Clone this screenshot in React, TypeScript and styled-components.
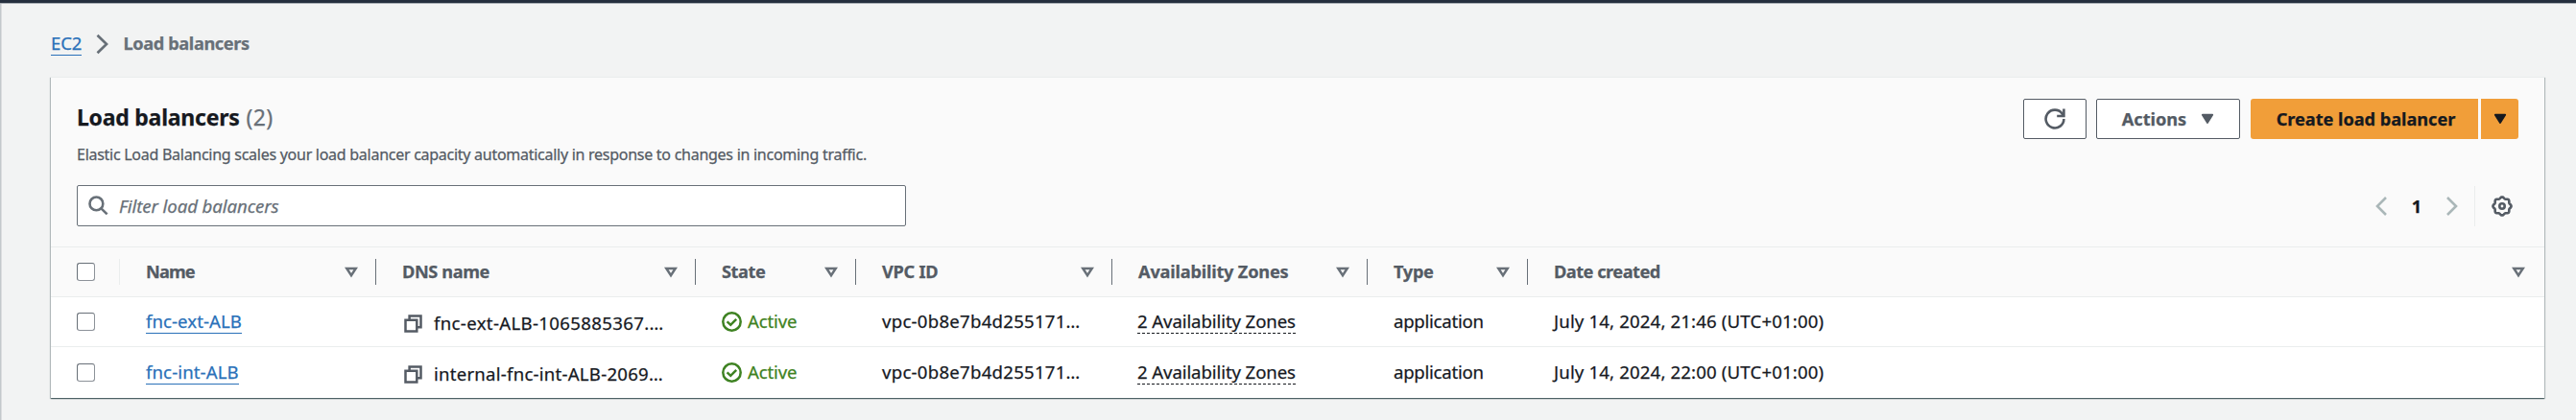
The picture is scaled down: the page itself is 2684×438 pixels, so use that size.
import React from "react";
import styled, { createGlobalStyle } from "styled-components";

const color = {
  text: "#16191f",
  heading: "#545b64",
  secondary: "#687078",
  link: "#2a71b9",
  orange: "#f19e39",
  green: "#3e8222",
  line: "#eaeded",
  disabled: "#aab7b8",
};

const GlobalStyle = createGlobalStyle`
  *, *::before, *::after { box-sizing: border-box; }
  body {
    margin: 0;
    background: #f2f3f3;
    color: ${color.text};
    font: 400 18.6px/24px "Noto Sans", "Open Sans", sans-serif;
    -webkit-text-stroke: 0.25px currentColor;
  }
`;

const Page = styled.div`
  height: 438px;
  border-top: 3px solid #252f3e;
  box-shadow: inset 0 1px 0 #a9aeb4, inset 2px 0 0 -0.5px #c3c8cb;
  padding: 0 33px 0 53px;
  overflow: hidden;
`;

const Txt = styled.span<{ $ls?: number }>`
  white-space: pre;
  letter-spacing: ${(p) => p.$ls ?? 0}px;
`;

const Link = styled.a<{ $ls?: number }>`
  color: ${color.link};
  border-bottom: 1px solid ${color.link};
  letter-spacing: ${(p) => p.$ls ?? 0}px;
  white-space: pre;
`;

const Breadcrumbs = styled.nav`
  display: flex;
  align-items: flex-start;
  height: 77px;
  padding-top: 30px;
`;

const BreadcrumbLink = styled(Link)`
  line-height: 24px;
`;

const BreadcrumbArrow = styled.svg`
  margin: 2px 15px 0 15px;
`;

const BreadcrumbCurrent = styled(Txt)`
  color: ${color.secondary};
  font-size: 18.2px;
  font-weight: 700;
`;

const Card = styled.section`
  width: 2598px;
  height: 335px;
  background: #fff;
  border-top: 1px solid ${color.line};
  box-shadow:
    0 1px 1px 0 rgba(0, 28, 36, 0.5),
    1px 1px 1px 0 rgba(0, 28, 36, 0.2),
    -1px 1px 1px 0 rgba(0, 28, 36, 0.2);
`;

const CardHeader = styled.header`
  height: 177px;
  padding: 22px 27px 0;
  background: #fafafa;
  border-bottom: 1px solid ${color.line};
`;

const HeaderRow = styled.div`
  display: flex;
  justify-content: space-between;
  height: 90px;
`;

const Title = styled.h1`
  margin: 3px 0 0;
  font-size: 23px;
  line-height: 32px;
  font-weight: 700;
`;

const Counter = styled(Txt)`
  color: ${color.secondary};
  font-weight: 400;
  margin-left: 7px;
`;

const Description = styled.p`
  margin: 11px 0 0;
  color: ${color.heading};
  font-size: 16px;
  line-height: 24px;
`;

const Actions = styled.div`
  display: flex;
  align-items: flex-start;
`;

const Button = styled.button<{ $w: number; $ml?: number }>`
  display: flex;
  align-items: center;
  justify-content: center;
  width: ${(p) => p.$w}px;
  height: 42px;
  margin: 0 0 0 ${(p) => p.$ml ?? 0}px;
  padding: 0 0 1px;
  background: #fff;
  border: 1px solid ${color.heading};
  border-radius: 2px;
  color: ${color.heading};
  font: 700 18.2px/24px "Noto Sans", "Open Sans", sans-serif;
`;

const PrimaryButton = styled(Button)<{ $side: "left" | "right" }>`
  background: ${color.orange};
  border: 0;
  border-radius: ${(p) => (p.$side === "left" ? "3px 0 0 3px" : "0 3px 3px 0")};
  color: ${color.text};
  padding-left: ${(p) => (p.$side === "left" ? 3 : 0)}px;
`;

const CaretIcon = styled.svg<{ $ml?: number }>`
  margin-left: ${(p) => p.$ml ?? 0}px;
`;

const ToolRow = styled.div`
  display: flex;
  justify-content: space-between;
`;

const Search = styled.div`
  display: flex;
  align-items: center;
  width: 864px;
  height: 43px;
  padding-left: 11px;
  background: #fff;
  border: 1px solid ${color.secondary};
  border-radius: 2px;
  color: ${color.secondary};
  font-style: italic;
`;

const SearchText = styled(Txt)`
  margin-left: 11px;
`;

const Pager = styled.div`
  display: flex;
  align-items: center;
  height: 42px;
  margin-top: 1px;
  padding-right: 6px;
`;

const PageNumber = styled.span`
  width: 62px;
  text-align: center;
  font-size: 18.2px;
  font-weight: 700;
  padding-bottom: 1px;
`;

const PagerDivider = styled.i`
  width: 1px;
  height: 42px;
  margin: 0 17px;
  background: ${color.line};
`;

const Row = styled.div<{ $h: number; $top: number }>`
  display: grid;
  grid-template-columns: 72px 267px 333px 167px 267px 266px 167px 1fr;
  height: ${(p) => p.$h}px;
  padding-top: ${(p) => p.$top}px;
  border-bottom: 1px solid ${color.line};
  &:last-child {
    border-bottom: 0;
  }
`;

const HeadRow = styled(Row)`
  background: #fafafa;
  color: ${color.heading};
  font-size: 18.2px;
  font-weight: 700;
`;

const HeadCell = styled.div<{ $light?: boolean; $last?: boolean }>`
  display: flex;
  align-items: center;
  justify-content: space-between;
  height: 27px;
  padding: 0 ${(p) => (p.$last ? 20 : 18)}px 0 27px;
  border-right: ${(p) => (p.$last ? "0" : `1px solid ${p.$light ? color.line : color.secondary}`)};
`;

const HeadLabel = styled(Txt)`
  padding-bottom: 1px;
`;

const Cell = styled.div`
  display: flex;
  align-items: flex-start;
  padding-left: 27px;
  white-space: nowrap;
`;

const Checkbox = styled.span<{ $mt?: number }>`
  width: 19px;
  height: 19px;
  margin-top: ${(p) => p.$mt ?? 0}px;
  border: 1px solid ${color.secondary};
  border-bottom-color: #8c9299;
  border-right-color: #8c9299;
  border-radius: 3px;
  background: #fff;
`;

const DnsText = styled(Txt)`
  margin: 2px 0 0 12px;
`;

const CopyIcon = styled.svg`
  margin: 5px 0 0 2px;
`;

const Status = styled.span`
  display: flex;
  color: ${color.green};
`;

const StatusIcon = styled.svg`
  margin: 2px 6px 0 0;
`;

const Zones = styled(Txt)`
  height: 25px;
  margin-left: -1px;
  background: repeating-linear-gradient(90deg, ${color.text} 0 3px, transparent 3px 5.05px) left bottom / 100% 1px no-repeat;
`;

const Chevron = ({ left, c }: { left?: boolean; c: string }) => (
  <svg width="12" height="20" viewBox="0 0 12 20" fill="none" stroke={c} strokeWidth="2.6">
    <path d={left ? "M11 1 2 10 11 19" : "M1 1 10 10 1 19"} />
  </svg>
);

const Caret = ({ ml }: { ml?: number }) => (
  <CaretIcon $ml={ml} width="14" height="12" viewBox="0 0 14 12">
    <path d="M1.8 1.7h10.4L7 10z" fill="currentColor" stroke="currentColor" strokeWidth="1.8" strokeLinejoin="round" />
  </CaretIcon>
);

const SortIcon = () => (
  <svg width="14" height="12" viewBox="0 0 14 12" fill="none" stroke={color.secondary}>
    <path d="M2.3 2h9.4L7 9.2z" strokeWidth="2.5" />
  </svg>
);

const gearPath =
  Array.from({ length: 96 }, (_, i) => {
    const a = (i / 96) * Math.PI * 2;
    const r = 8.8 + 0.75 * Math.cos(8 * a);
    return `${i ? "L" : "M"}${(11 + r * Math.sin(a)).toFixed(2)} ${(11 - r * Math.cos(a)).toFixed(2)}`;
  }).join("") + "Z";

const Gear = () => (
  <svg width="22" height="22" viewBox="0 0 22 22" fill="none" stroke={color.heading} strokeWidth="2.6">
    <path d={gearPath} />
    <circle cx="11" cy="11" r="2.7" />
  </svg>
);

const columns: { label: string; ls: number }[] = [
  { label: "Name", ls: -0.85 },
  { label: "DNS name", ls: -0.4 },
  { label: "State", ls: -0.4 },
  { label: "VPC ID", ls: -0.25 },
  { label: "Availability Zones", ls: -0.2 },
  { label: "Type", ls: -0.3 },
  { label: "Date created", ls: -0.5 },
];

const rows = [
  { name: "fnc-ext-ALB", nameLs: 0.07, dns: "fnc-ext-ALB-1065885367.…", dnsLs: 0.35, date: "July 14, 2024, 21:46 (UTC+01:00)" },
  { name: "fnc-int-ALB", nameLs: 0.11, dns: "internal-fnc-int-ALB-2069…", dnsLs: 0.24, date: "July 14, 2024, 22:00 (UTC+01:00)" },
];

export default function App() {
  return (
    <>
      <GlobalStyle />
      <Page>
        <Breadcrumbs>
          <BreadcrumbLink $ls={-0.12}>EC2</BreadcrumbLink>
          <BreadcrumbArrow width="13" height="22" viewBox="0 0 13 22" fill="none" stroke={color.secondary} strokeWidth="2.7">
            <path d="M1.5 1.8 11 11 1.5 20.2" />
          </BreadcrumbArrow>
          <BreadcrumbCurrent $ls={-0.37}>Load balancers</BreadcrumbCurrent>
        </Breadcrumbs>
        <Card>
          <CardHeader>
            <HeaderRow>
              <div>
                <Title>
                  <Txt $ls={-0.24}>Load balancers</Txt>
                  <Counter $ls={0.3}>(2)</Counter>
                </Title>
                <Description>
                  <Txt $ls={-0.27}>
                    Elastic Load Balancing scales your load balancer capacity automatically in response to changes in incoming traffic.
                  </Txt>
                </Description>
              </div>
              <Actions>
                <Button $w={66} aria-label="Refresh">
                  <svg width="22" height="22" viewBox="0 0 22 22" fill="none" stroke={color.heading} strokeWidth="2.6">
                    <path d="M20.4 11A9.4 9.4 0 1 1 18.6 5.5L20 8" />
                    <path d="M20.4 .6V8H13.2" />
                  </svg>
                </Button>
                <Button $w={150} $ml={10}>
                  <Txt $ls={-0.02}>Actions</Txt>
                  <Caret ml={15} />
                </Button>
                <PrimaryButton $side="left" $w={237} $ml={11}>
                  <Txt $ls={-0.04}>Create load balancer</Txt>
                </PrimaryButton>
                <PrimaryButton $side="right" $w={39} $ml={3} aria-label="More">
                  <Caret />
                </PrimaryButton>
              </Actions>
            </HeaderRow>
            <ToolRow>
              <Search>
                <svg width="21" height="21" viewBox="0 0 21 21" fill="none" stroke={color.secondary} strokeWidth="2.6">
                  <circle cx="8.4" cy="8.4" r="6.9" />
                  <path d="M13.4 13.4 19.6 19.4" />
                </svg>
                <SearchText $ls={-0.08}>Filter load balancers</SearchText>
              </Search>
              <Pager>
                <Chevron left c={color.disabled} />
                <PageNumber>1</PageNumber>
                <Chevron c={color.disabled} />
                <PagerDivider />
                <Gear />
              </Pager>
            </ToolRow>
          </CardHeader>
          <HeadRow $h={52} $top={12}>
            <HeadCell $light>
              <Checkbox />
            </HeadCell>
            {columns.map((c, i) => (
              <HeadCell key={c.label} $last={i === columns.length - 1}>
                <HeadLabel $ls={c.ls}>{c.label}</HeadLabel>
                <SortIcon />
              </HeadCell>
            ))}
          </HeadRow>
          {rows.map((r, i) => (
            <Row key={r.name} $h={i ? 53 : 52} $top={i ? 14 : 13}>
              <Cell>
                <Checkbox $mt={3} />
              </Cell>
              <Cell>
                <Link $ls={r.nameLs}>{r.name}</Link>
              </Cell>
              <Cell>
                <CopyIcon width="19" height="19" viewBox="0 0 19 19" fill="none" stroke={color.heading} strokeWidth="2.5">
                  <path d="M1.5 5.7h11.8v11.8H1.5z" />
                  <path d="M5.6 5.5V1.4h11.9v11.9h-4" />
                </CopyIcon>
                <DnsText $ls={r.dnsLs}>{r.dns}</DnsText>
              </Cell>
              <Cell>
                <Status>
                  <StatusIcon width="21" height="21" viewBox="0 0 21 21" fill="none" stroke={color.green} strokeWidth="2.5">
                    <circle cx="10.5" cy="10.5" r="9.2" />
                    <path d="M5.6 10.3 9.3 13.8 15.2 7.8" />
                  </StatusIcon>
                  <Txt $ls={-0.15}>Active</Txt>
                </Status>
              </Cell>
              <Cell>
                <Txt $ls={0.26}>vpc-0b8e7b4d255171…</Txt>
              </Cell>
              <Cell>
                <Zones $ls={-0.1}>2 Availability Zones</Zones>
              </Cell>
              <Cell>
                <Txt $ls={-0.26}>application</Txt>
              </Cell>
              <Cell>
                <Txt $ls={0.16}>{r.date}</Txt>
              </Cell>
            </Row>
          ))}
        </Card>
      </Page>
    </>
  );
}
